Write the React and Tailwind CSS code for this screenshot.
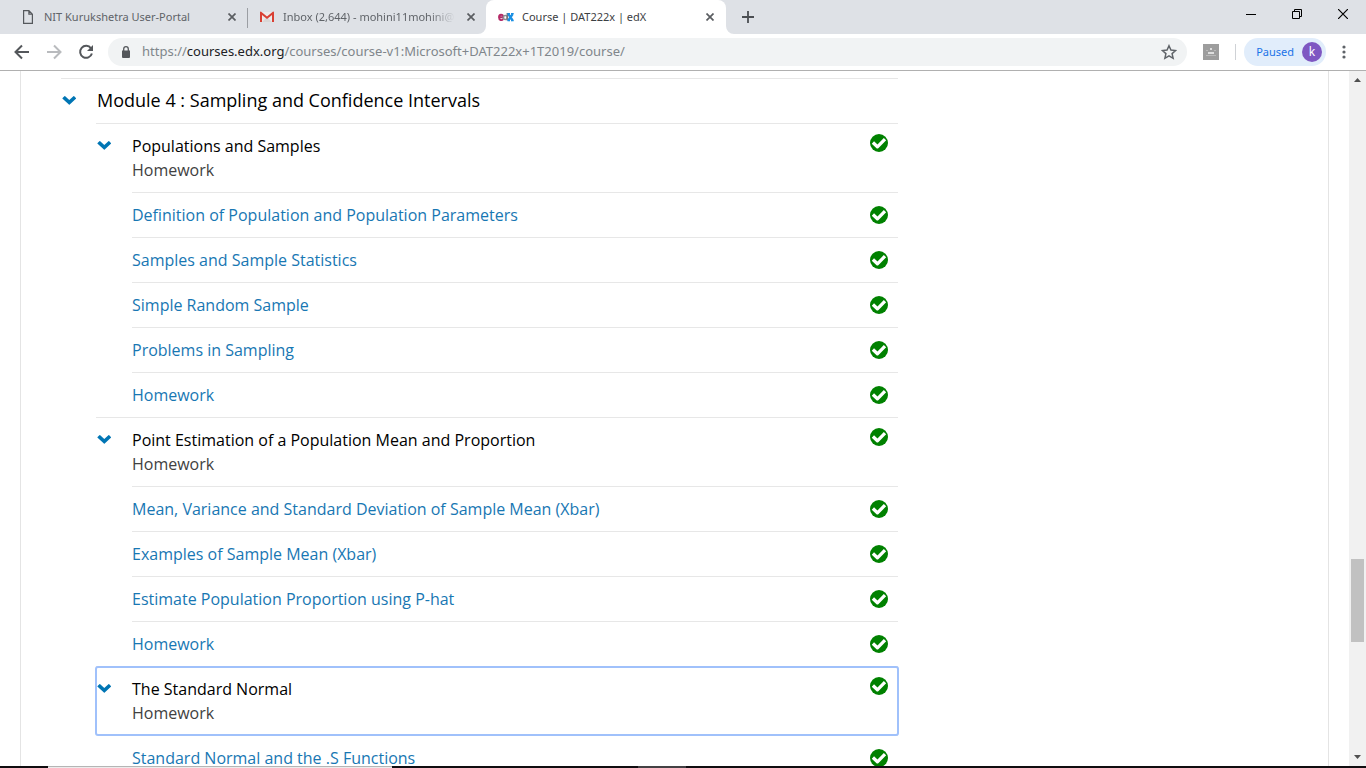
import React from "react";

const sections = [
  {
    title: "Populations and Samples",
    kind: "Homework",
    units: [
      "Definition of Population and Population Parameters",
      "Samples and Sample Statistics",
      "Simple Random Sample",
      "Problems in Sampling",
      "Homework",
    ],
  },
  {
    title: "Point Estimation of a Population Mean and Proportion",
    kind: "Homework",
    units: [
      "Mean, Variance and Standard Deviation of Sample Mean (Xbar)",
      "Examples of Sample Mean (Xbar)",
      "Estimate Population Proportion using P-hat",
      "Homework",
    ],
  },
  {
    title: "The Standard Normal",
    kind: "Homework",
    focused: true,
    units: ["Standard Normal and the .S Functions"],
  },
];

function Cross() {
  return (
    <svg className="size-2" viewBox="0 0 8 8" fill="none" stroke="#5a5d61" strokeWidth="1.7">
      <path d="M.5.5l7 7M7.5.5l-7 7" />
    </svg>
  );
}

function PageIcon() {
  return (
    <svg className="h-3.5 w-3" viewBox="0 0 12 14" fill="none" stroke="#55585c" strokeWidth="1.2">
      <path d="M1.6.6h5.3l3.5 3.6v9.2H1.6zM6.9.6v3.6h3.5" />
    </svg>
  );
}

function GmailIcon() {
  return (
    <svg className="h-3 w-3.5" viewBox="0 0 14 12">
      <path d="M1 1h12v10H1z" fill="#eceaea" />
      <path d="M2 11l5-5 5 5z" fill="#d8d6d6" />
      <path d="M0 11V1.2Q0 .6.9.6L7 5.4 13.1.6q.9 0 .9.6V11h-2V4.1L7 8 2 4.1V11z" fill="#d93f33" />
    </svg>
  );
}

function EdxIcon() {
  return (
    <svg className="h-3 w-4" viewBox="0 0 16 12" fill="none" strokeWidth="1.9">
      <path d="M1.5 6.2h3.7C5 3 1 3 1 6.3S4 9.6 5.2 8.2" stroke="#b52a67" />
      <circle cx="7.3" cy="6.5" r="2" stroke="#8d8d92" strokeWidth="1.6" />
      <path d="M9.3 2v7.5" stroke="#77777d" strokeWidth="1.5" />
      <path d="M10.2 3l4.5 6.5M14.7 3l-4.5 6.5" stroke="#1a8fe3" strokeWidth="2.2" />
      <path d="M9.5 2.7h2.5M13 2.7h2.7M9.5 9.6h2.5M13 9.6h2.7" stroke="#1a8fe3" strokeWidth="1.3" />
    </svg>
  );
}

function Flare({ side }) {
  return (
    <svg
      className={side === "left" ? "absolute bottom-0 -left-2 size-2" : "absolute bottom-0 -right-2 size-2"}
      viewBox="0 0 8 8"
      fill="#fff"
    >
      <path d={side === "left" ? "M8 0v8H0A8 8 0 0 0 8 0z" : "M0 0v8h8A8 8 0 0 1 0 0z"} />
    </svg>
  );
}

function Tab({ icon, label, active, divider, fade }) {
  return (
    <div
      className={
        "relative flex h-full min-w-0 items-center pl-3 " +
        (active ? "w-[240px] rounded-t-lg bg-white pr-3 text-[#3c4043]" : "w-[239px] pr-[11px] text-[#5f6368]")
      }
    >
      {active && <Flare side="left" />}
      {active && <Flare side="right" />}
      <span className="flex w-4 shrink-0 justify-center">{icon}</span>
      <button
        className={
          "ml-2 min-w-0 flex-1 overflow-hidden text-left whitespace-nowrap " +
          (fade ? "mask-r-from-85% mask-r-to-100%" : "")
        }
      >
        {label}
      </button>
      <button aria-label="Close tab" className="ml-3">
        <Cross />
      </button>
      {divider && <span className="absolute top-2 -right-px h-5 w-px bg-[#9b9ea3]" />}
    </div>
  );
}

function Chevron() {
  return (
    <svg className="h-2.5 w-3.5 shrink-0" viewBox="0 0 14 10" fill="#0075b4">
      <path d="M.6 3L2.4 1.2Q2.8.8 3.2 1.2L7.3 5.1 11.400 1.200Q11.800.8 12.200 1.200L13.900 3Q14.300 3.400 13.900 3.800L7.700 9.600Q7.300 10 6.900 9.600L.6 3.800Q.2 3.400.6 3z" />
    </svg>
  );
}

function Check() {
  return (
    <svg className="size-[18px] shrink-0" viewBox="0 0 18 18">
      <circle cx="9" cy="9" r="9" fill="#008100" />
      <path d="M2.900 8.500l4.500 4.300 7.600-7.600" fill="none" stroke="#fff" strokeWidth="3.300" strokeLinejoin="round" />
    </svg>
  );
}

function Section({ section }) {
  return (
    <li className="border-t border-[#e7e7e7]">
      <button
        className={
          "flex w-full items-start py-2.5 pr-2.5 pl-px text-left " +
          (section.focused ? "rounded-xs outline-2 -outline-offset-1 outline-[#a0c1fb]" : "")
        }
      >
        <span className="flex h-[22px] w-[35px] items-center">
          <Chevron />
        </span>
        <span className="flex-1">
          <span className="block text-black">{section.title}</span>
          <span className="block text-[#414141]">{section.kind}</span>
        </span>
        <Check />
      </button>
      <ul className="ml-9">
        {section.units.map((unit) => (
          <li key={unit} className="border-t border-[#e7e7e7]">
            <a href="#unit" className="flex items-center py-2.5 pr-2.5 text-[#1877b3]">
              <span className="flex-1">{unit}</span>
              <Check />
            </a>
          </li>
        ))}
      </ul>
    </li>
  );
}

export default function App() {
  return (
    <div className="flex h-screen flex-col overflow-hidden bg-white font-['Open_Sans',sans-serif]">
      <header className="shrink-0 border-b border-[#b0b0b0] font-['Noto_Sans',sans-serif]">
        <div className="flex h-[34px] items-stretch bg-[#dee1e6] pl-2 text-[11px]">
          <Tab icon={<PageIcon />} label="NIT Kurukshetra User-Portal" divider />
          <Tab icon={<GmailIcon />} label="Inbox (2,644) - mohini11mohini@gmail.com" fade />
          <Tab icon={<EdxIcon />} label="Course | DAT222x | edX" active />
          <button aria-label="New tab" className="ml-4 self-center">
            <svg className="size-3" viewBox="0 0 12 12" stroke="#4b4e52" strokeWidth="1.8">
              <path d="M6 0v12M0 6h12" />
            </svg>
          </button>
          <div className="mr-[18px] mb-1.5 ml-auto flex items-center gap-9">
            <button aria-label="Minimize">
              <svg className="size-2.5" viewBox="0 0 10 10" stroke="#000">
                <path d="M0 5.5h10" />
              </svg>
            </button>
            <button aria-label="Restore">
              <svg className="size-2.5" viewBox="0 0 10 10" fill="none" stroke="#000">
                <path d="M.5 2.5h7v7h-7zM2.5 2.5v-2h7v7h-2" />
              </svg>
            </button>
            <button aria-label="Close window">
              <svg className="size-2.5" viewBox="0 0 10 10" stroke="#000" strokeWidth="1.2">
                <path d="M0 0l10 10M10 0L0 10" />
              </svg>
            </button>
          </div>
        </div>
        <div className="flex h-9 items-center pr-5 pl-3.5">
          <button aria-label="Back">
            <svg className="size-4" viewBox="0 0 16 16" fill="none" stroke="#54575b" strokeWidth="2">
              <path d="M15 8H2M8 1.500L1.500 8 8 14.500" />
            </svg>
          </button>
          <button aria-label="Forward" className="ml-4">
            <svg className="size-4" viewBox="0 0 16 16" fill="none" stroke="#b9bbbe" strokeWidth="2">
              <path d="M1 8h13M8 1.500L14.500 8 8 14.500" />
            </svg>
          </button>
          <button aria-label="Reload" className="ml-4">
            <svg className="size-4" viewBox="0 0 16 16">
              <path d="M13 4.300A6 6 0 1 0 13.900 9.500" fill="none" stroke="#54575b" strokeWidth="2" />
              <path d="M15 1v6H9z" fill="#54575b" />
            </svg>
          </button>
          <div className="ml-3.5 flex h-7 flex-1 items-center rounded-full bg-[#f1f3f4] px-3.5">
            <svg className="h-3 w-2" viewBox="0 0 8 12">
              <path d="M0 4.500h8V11q0 1-1 1H1q-1 0-1-1z" fill="#54575b" />
              <path d="M1.700 5V3Q1.700.7 4 .7T6.300 3v2" fill="none" stroke="#54575b" strokeWidth="1.3" />
            </svg>
            <button className="ml-3 flex-1 text-left text-[13px] text-[#80868b]">
              https://<span className="text-[#202124]">courses.edx.org</span>
              /courses/course-v1:Microsoft+DAT222x+1T2019/course/
            </button>
            <button aria-label="Bookmark this page" className="-mr-1">
              <svg className="size-4" viewBox="0 0 14 14" fill="none" stroke="#5f6368" strokeWidth="1.3">
                <path d="M7 1.500l1.700 3.800 4.100.4-3.100 2.700.9 4.100L7 10.400l-3.600 2.100.9-4.100L1.200 5.700l4.100-.4z" />
              </svg>
            </button>
          </div>
          <button aria-label="Extension" className="ml-4">
            <svg className="size-4" viewBox="0 0 16 16">
              <path d="M0 0h16v16H0z" fill="#9d9d9d" />
              <path d="M7 4h2v2H7zM5 8h6v2H5z" fill="#dedede" />
              <path d="M3 6h2v1H3zM11 6h2v1h-2zM3 11h10v1H3z" fill="#b9b9b9" />
            </svg>
          </button>
          <span className="ml-4 h-4 w-px bg-[#cfd2d6]" />
          <button className="ml-2 flex h-7 items-center gap-2 rounded-full bg-[#e1edfb] pr-1 pl-3 text-[11px] text-[#1a73e8]">
            Paused
            <span className="flex size-5 items-center justify-center rounded-full bg-[#7e57c2] text-xs text-white">
              k
            </span>
          </button>
          <button aria-label="Menu" className="ml-4">
            <svg className="h-3.5 w-1" viewBox="0 0 4 14" fill="#5f6368">
              <circle cx="2" cy="2" r="1.6" />
              <circle cx="2" cy="7" r="1.6" />
              <circle cx="2" cy="12" r="1.6" />
            </svg>
          </button>
        </div>
      </header>

      <div className="flex min-h-0 flex-1">
        <main className="min-w-0 flex-1 overflow-hidden px-5">
          <div className="min-h-full border-x border-[#e4e4e4] pt-[7px] pr-[430px] pl-10 text-base leading-6">
            <section className="border-t border-[#e7e7e7]">
              <button className="flex w-full items-start pt-2.5 pb-3 pl-px text-left">
                <span className="flex h-[22px] w-[35px] items-center">
                  <Chevron />
                </span>
                <span className="text-lg leading-[22px] text-black">
                  Module 4 : Sampling and Confidence Intervals
                </span>
              </button>
              <ol className="ml-[35px]">
                {sections.map((section) => (
                  <Section key={section.title} section={section} />
                ))}
              </ol>
            </section>
          </div>
        </main>
        <div aria-hidden="true" className="flex w-[17px] flex-col items-center bg-[#f1f1f1] py-[7px]">
          <svg className="h-1 w-[7px]" viewBox="0 0 7 4" fill="#505050">
            <path d="M0 4L3.500 0 7 4z" />
          </svg>
          <span className="flex-[477]" />
          <span className="w-[13px] flex-[83] bg-[#c1c1c1]" />
          <span className="flex-[113]" />
          <svg className="h-1 w-[7px]" viewBox="0 0 7 4" fill="#505050">
            <path d="M0 0h7L3.500 4z" />
          </svg>
        </div>
      </div>
      <div className="flex h-0.5 shrink-0 bg-[#100d10]">
        <span className="ml-12 w-[344px] border-t border-[#b5b5b5] bg-[#ececec]" />
        <span className="ml-[246px] w-12 bg-[#444144]" />
      </div>
    </div>
  );
}
